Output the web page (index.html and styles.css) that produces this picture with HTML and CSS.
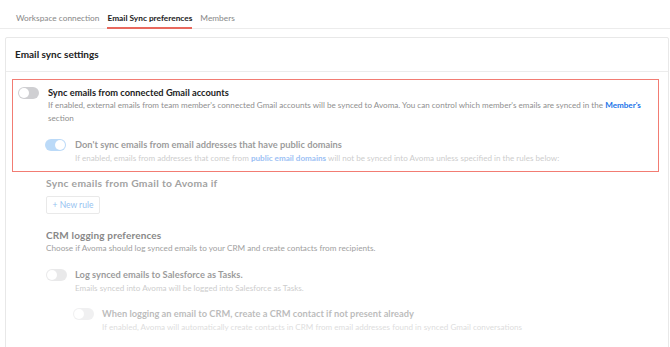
FILE: index.html
```html
<!DOCTYPE html>
<html lang="en">
<head>
    <meta charset="UTF-8">
    <title>Email Sync preferences</title>
    <link rel="stylesheet" href="styles.css">
</head>
<body>

<div class="tabs">
    <span class="tab">Workspace connection</span>
    <span class="tab active">Email Sync preferences</span>
    <span class="tab">Members</span>
</div>

<div class="card">
    <div class="card-header">Email sync settings</div>
    <div class="card-body">
        <div class="highlight">
            <div class="setting">
                <span class="toggle"></span>
                <div>
                    <div class="title">Sync emails from connected Gmail accounts</div>
                    <div class="desc">If enabled, external emails from team member's connected Gmail accounts will be synced to Avoma. You can control which member's emails are synced in the <a class="link">Member's</a> section</div>
                </div>
            </div>
            <div class="setting nested faded">
                <span class="toggle on"></span>
                <div>
                    <div class="title">Don't sync emails from email addresses that have public domains</div>
                    <div class="desc">If enabled, emails from addresses that come from <a class="link">public email domains</a> will not be synced into Avoma unless specified in the rules below:</div>
                </div>
            </div>
        </div>

        <div class="section rules">
            <div class="section-title">Sync emails from Gmail to Avoma if</div>
            <button class="rule-btn">+ New rule</button>
        </div>

        <div class="section crm">
            <div class="section-title">CRM logging preferences</div>
            <div class="section-desc">Choose if Avoma should log synced emails to your CRM and create contacts from recipients.</div>
        </div>

        <div class="setting sub faded">
            <span class="toggle"></span>
            <div>
                <div class="title">Log synced emails to Salesforce as Tasks.</div>
                <div class="desc">Emails synced into Avoma will be logged into Salesforce as Tasks.</div>
            </div>
        </div>
        <div class="setting sub deep faded-more">
            <span class="toggle"></span>
            <div>
                <div class="title">When logging an email to CRM, create a CRM contact if not present already</div>
                <div class="desc">If enabled, Avoma will automatically create contacts in CRM from email addresses found in synced Gmail conversations</div>
            </div>
        </div>
    </div>
</div>

</body>
</html>
```

FILE: styles.css
```css
body { font-family: Lato, "Open Sans", sans-serif; margin: 0; padding: 0; background: #fff; color: #333; overflow: hidden; }
.tabs { display: flex; gap: 8px; padding: 12px 0 0 16px; height: 16px; border-bottom: 1px solid #ececec; }
.tab { font-size: 8.3px; color: #888; line-height: 13px; height: 15px; }
.tab.active { color: #222; font-weight: bold; border-bottom: 2px solid #e8685d; }
.card { margin: 8px 1px 0 5px; border: 1px solid #e8e8e8; border-radius: 2px; height: 320px; }
.card-header { height: 33px; line-height: 33px; padding-left: 9px; font-size: 10px; font-weight: bold; color: #222; border-bottom: 1px solid #ececec; }
.card-body { padding: 7px 9px 0 6px; }
.highlight { border: 1px solid #f27c73; padding: 6px 6px 6px 5px; }
.setting { display: flex; align-items: flex-start; gap: 9px; }
.toggle { flex: none; position: relative; width: 21px; height: 12px; border-radius: 6px; background: #cfcfd2; margin-top: 1px; }
.toggle::after { content: ""; position: absolute; top: 1px; left: 1px; width: 10px; height: 10px; border-radius: 50%; background: #fff; }
.toggle.on { background: #6aaef0; }
.toggle.on::after { left: 10px; }
.title { font-size: 9.3px; font-weight: bold; line-height: 13px; color: #222; }
.desc { font-size: 8.1px; line-height: 13px; color: #8f8f8f; }
.link { color: #1a73e8; font-weight: bold; }
.nested { margin: 13px 0 0 27px; }
.nested .desc { line-height: 14px; }
.faded { opacity: 0.45; }
.faded-more { opacity: 0.3; }
.section { margin-left: 34px; }
.section.rules { margin-top: 5px; opacity: 0.55; }
.rules .section-title { font-size: 10.3px; letter-spacing: 0.3px; }
.section-title { font-size: 10px; line-height: 13px; font-weight: bold; color: #555; letter-spacing: 0.15px; }
.rule-btn { display: block; margin-top: 6px; height: 18px; width: 54px; padding: 0; font-family: inherit; font-size: 8.5px; color: #3d8fe6; background: #fff; border: 1px solid #d8d8d8; border-radius: 2px; }
.section.crm { margin-top: 15px; opacity: 0.7; }
.section-desc { font-size: 8.2px; line-height: 13px; color: #777; }
.sub { margin: 13px 0 0 34px; gap: 8px; }
.sub .desc { line-height: 14px; }
.sub.deep { margin: 12px 0 0 61px; }
```
